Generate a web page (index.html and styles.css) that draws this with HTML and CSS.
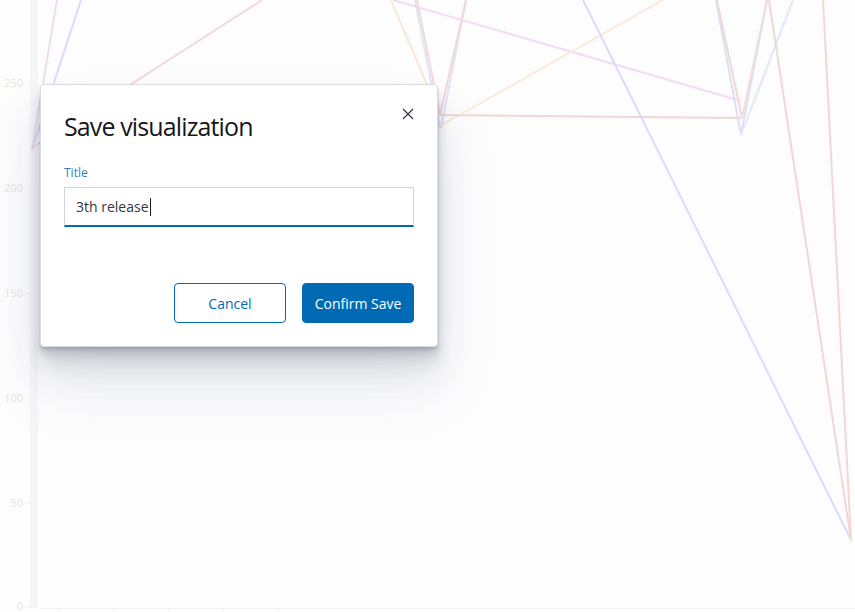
FILE: index.html
```html
<!DOCTYPE html>
<html lang="en">
<head>
<meta charset="utf-8">
<title>Save visualization</title>
<link rel="stylesheet" href="styles.css">
</head>
<body>
<div class="page">
  <svg class="chart" width="855" height="612" viewBox="0 0 855 612" xmlns="http://www.w3.org/2000/svg">
    <rect x="30" y="0" width="8" height="608" fill="#f6f6f7"/>
    <g class="ticks" stroke="#f1eeeb" stroke-width="1">
      <line x1="27" y1="83.5" x2="31" y2="83.5"/>
      <line x1="27" y1="188.5" x2="31" y2="188.5"/>
      <line x1="27" y1="293.5" x2="31" y2="293.5"/>
      <line x1="27" y1="398.5" x2="31" y2="398.5"/>
      <line x1="27" y1="503.5" x2="31" y2="503.5"/>
      <line x1="27" y1="607.5" x2="31" y2="607.5"/>
    </g>
    <g class="xaxis" stroke="#f6f5f4" stroke-width="1">
      <line x1="38" y1="608.5" x2="855" y2="608.5"/>
      <line x1="58.5" y1="609" x2="58.5" y2="612"/>
      <line x1="113.5" y1="609" x2="113.5" y2="612"/>
      <line x1="168.5" y1="609" x2="168.5" y2="612"/>
      <line x1="223.5" y1="609" x2="223.5" y2="612"/>
      <line x1="278.5" y1="609" x2="278.5" y2="612"/>
    </g>
    <g class="labels" font-family="Open Sans, sans-serif" font-size="11" fill="#e9e3dd" text-anchor="end">
      <text x="23" y="87">250</text>
      <text x="23" y="192">200</text>
      <text x="23" y="297">150</text>
      <text x="23" y="402">100</text>
      <text x="23" y="507">50</text>
      <text x="23" y="610">0</text>
    </g>
    <g fill="none" stroke-width="2" stroke-linejoin="round">
      <polyline points="57,0 32,150" stroke="#f1dcef"/>
      <polyline points="81,0 32,150" stroke="#dcdaf6"/>
      <polyline points="32,148 262,0" stroke="#f1d8d6"/>
      <polyline points="391,0 440,115" stroke="#f8e7d6"/>
      <polyline points="415,0 440,128" stroke="#e0e4f7"/>
      <polyline points="417,0 440,115" stroke="#f1dad6"/>
      <polyline points="466,0 441,128" stroke="#e0e4f7"/>
      <polyline points="466,0 440,115" stroke="#f1d8d6"/>
      <polyline points="393,0 741,101" stroke="#f2dcf1"/>
      <polyline points="440,126 663,0" stroke="#f9ead9"/>
      <polyline points="440,115 741,118" stroke="#f1d8d6"/>
      <polyline points="583,0 851,540" stroke="#dcdaf6"/>
      <polyline points="716,0 741,135" stroke="#dcdff6"/>
      <polyline points="717,0 742,118" stroke="#f1d8d6"/>
      <polyline points="767,0 741,135" stroke="#dcdff6"/>
      <polyline points="767,0 742,118" stroke="#f2dcd8"/>
      <polyline points="793,0 741,135" stroke="#e2e7f9"/>
      <polyline points="769,0 851,540" stroke="#f1d8d6"/>
      <polyline points="823,0 851,540" stroke="#f1d8d6"/>
    </g>
    <circle cx="851" cy="540" r="2" fill="#f4f0d6"/>
  </svg>

  <div class="overlay">
    <div class="modal" role="dialog">
      <button class="modal-close" aria-label="Close">
        <svg width="12" height="12" viewBox="0 0 12 12"><path d="M1 1 L11 11 M11 1 L1 11" stroke="#343741" stroke-width="1.2" fill="none"/></svg>
      </button>
      <div class="modal-header">
        <h2 class="modal-title">Save visualization</h2>
      </div>
      <div class="modal-body">
        <label class="form-label">Title</label>
        <div class="field">3th release<span class="caret"></span></div>
      </div>
      <div class="modal-footer">
        <button class="btn btn-empty">Cancel</button>
        <button class="btn btn-fill">Confirm Save</button>
      </div>
    </div>
  </div>
</div>
</body>
</html>
```

FILE: styles.css
```css
* { box-sizing: border-box; }
html, body {
  margin: 0;
  padding: 0;
  background: #fdfdfe;
  font-family: "Open Sans", "Liberation Sans", sans-serif;
}
.page {
  position: relative;
  width: 855px;
  height: 612px;
  overflow: hidden;
}
.chart {
  display: block;
}
.overlay {
  position: absolute;
  inset: 0;
  display: flex;
  align-items: flex-start;
  justify-content: flex-start;
  padding: 84px 0 0 40px;
}
.modal {
  position: relative;
  width: 398px;
  background: #fff;
  border: 1px solid #d8dbe2;
  border-radius: 4px;
  display: flex;
  flex-direction: column;
  box-shadow:
    0 40px 64px 0 rgba(65, 78, 101, 0.1),
    0 24px 32px 0 rgba(65, 78, 101, 0.1),
    0 16px 16px 0 rgba(65, 78, 101, 0.1),
    0 8px 8px 0 rgba(65, 78, 101, 0.12),
    0 4px 4px 0 rgba(65, 78, 101, 0.12),
    0 2px 2px 0 rgba(65, 78, 101, 0.12);
}
.modal-close {
  position: absolute;
  top: 17px;
  right: 17px;
  width: 24px;
  height: 24px;
  border: 0;
  padding: 0;
  background: transparent;
  display: flex;
  align-items: center;
  justify-content: center;
}
.modal-header {
  padding: 25px 40px 16px 23px;
}
.modal-title {
  margin: 0;
  font-size: 25px;
  line-height: 32px;
  font-weight: 500;
  color: #16171c;
  letter-spacing: -0.035em;
}
.modal-body {
  padding: 6px 23px 32px 23px;
  display: flex;
  flex-direction: column;
}
.form-label {
  font-size: 12px;
  line-height: 18px;
  font-weight: 500;
  color: #2f80c2;
  margin-bottom: 5px;
}
.field {
  height: 40px;
  border: 1px solid #d2d4d8;
  border-bottom: 2px solid #006bb4;
  padding: 0 11px;
  display: flex;
  align-items: center;
  font-size: 14px;
  color: #343741;
  background: #fff;
}
.caret {
  display: inline-block;
  width: 1px;
  height: 18px;
  background: #1a1c21;
  margin-left: 1px;
}
.modal-footer {
  padding: 24px 23px 23px 23px;
  display: flex;
  justify-content: flex-end;
  gap: 16px;
}
.btn {
  width: 112px;
  height: 40px;
  border-radius: 4px;
  font-family: "Open Sans", "Liberation Sans", sans-serif;
  font-size: 14px;
  padding: 0;
}
.btn-empty {
  background: #fff;
  border: 1px solid #006bb4;
  color: #006bb4;
}
.btn-fill {
  background: #006bb4;
  border: 1px solid #006bb4;
  color: #fff;
}
```
